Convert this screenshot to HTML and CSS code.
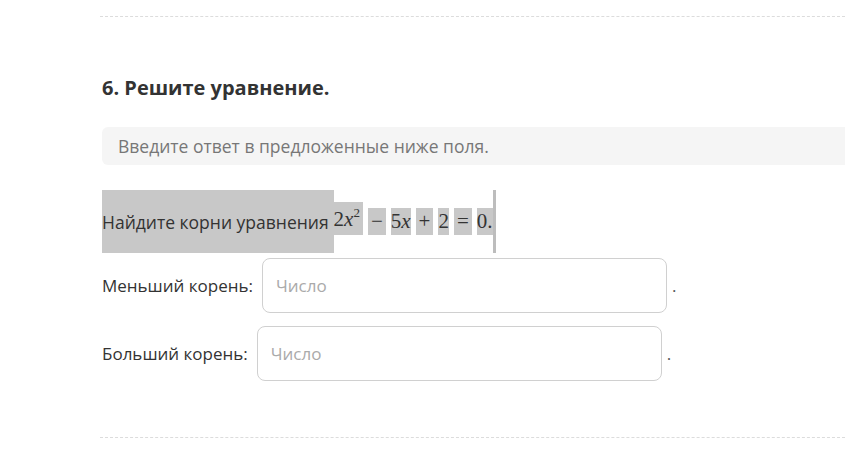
FILE: index.html
```html
<!DOCTYPE html>
<html lang="ru">
  <head>
    <meta charset="UTF-8" />
    <meta name="viewport" content="width=device-width, initial-scale=1.0" />
    <title>Задание 6</title>
    <link rel="stylesheet" href="styles.css">
  </head>
  <body>
    <div class="task">
      <div class="sep"></div>
      <h2 class="title">6. Решите уравнение.</h2>
      <div class="hint">Введите ответ в предложенные ниже поля.</div>

      <div class="problem">
        <span class="lead">Найдите корни уравнения</span>
        <span class="math">
          <span class="tok tok-first">2<i>x</i><sup>2</sup></span>
          <span class="tok op">−</span>
          <span class="tok">5<i>x</i></span>
          <span class="tok op">+</span>
          <span class="tok">2</span>
          <span class="tok op">=</span>
          <span class="tok">0.</span>
        </span>
        <span class="caret"></span>
      </div>

      <div class="field">
        <label class="field-label">Меньший корень:</label>
        <input class="field-input" type="text" placeholder="Число" />
        <span class="dot">.</span>
      </div>
      <div class="field field-second">
        <label class="field-label">Больший корень:</label>
        <input class="field-input" type="text" placeholder="Число" />
        <span class="dot">.</span>
      </div>

      <div class="sep sep-bottom"></div>
    </div>
  </body>
</html>
```

FILE: styles.css
```css
* {
  margin: 0;
  padding: 0;
  box-sizing: border-box;
}
body {
  font-family: "Open Sans", "Noto Sans", sans-serif;
  color: #333;
  background: #fff;
  overflow: hidden;
}
.task {
  padding-left: 102px;
}
.sep {
  margin-top: 16px;
  margin-left: -2px;
  border-top: 1.5px dashed #dcdcdc;
}
.title {
  margin-top: 58px;
  font-size: 20px;
  line-height: 26px;
  font-weight: 700;
  color: #333;
}
.hint {
  margin-top: 26px;
  margin-right: -12px;
  height: 38px;
  line-height: 38px;
  padding: 0 16px;
  background: #f5f5f5;
  border-radius: 6px;
  font-size: 17.5px;
  color: #777;
}
.problem {
  margin-top: 25px;
  display: flex;
  align-items: center;
  height: 63px;
}
.lead {
  display: flex;
  align-items: center;
  height: 63px;
  padding-right: 5px;
  background: #c8c8c8;
  font-size: 17.5px;
  white-space: nowrap;
}
.math {
  display: flex;
  align-items: center;
  font-family: "Liberation Serif", "DejaVu Serif", serif;
  font-size: 21px;
  color: #333;
}
.tok {
  display: inline-block;
  background: #c8c8c8;
  height: 27px;
  line-height: 27px;
  margin-right: 5px;
}
.tok-first {
  height: 33px;
  line-height: 35px;
  margin-top: -6px;
  padding-right: 3px;
}
.tok sup {
  font-size: 13px;
  line-height: 0;
  vertical-align: 9px;
}
.op {
  padding: 0 3px;
}
.tok:last-child {
  margin-right: 0;
}
.caret {
  width: 3px;
  height: 63px;
  background: #bdbdbd;
}
.field {
  margin-top: 5px;
  display: flex;
  align-items: center;
}
.field-second {
  margin-top: 13px;
}
.field-label {
  font-size: 17px;
  color: #333;
  white-space: nowrap;
}
.field-input {
  margin-left: 9px;
  width: 405px;
  height: 55px;
  padding: 0 13px;
  border: 1px solid #d0d0d0;
  border-radius: 8px;
  font-family: "Open Sans", "Noto Sans", sans-serif;
  font-size: 17px;
  color: #333;
  outline: none;
}
.field-input::placeholder {
  color: #aaa;
}
.dot {
  margin-left: 5px;
  font-size: 17px;
  color: #555;
}
.sep-bottom {
  margin-top: 56px;
}
```
